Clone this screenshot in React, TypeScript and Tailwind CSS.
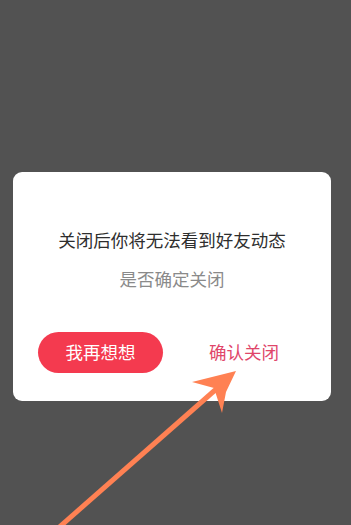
export default function App() {
  return (
    <div
      className="relative h-[525px] w-[351px] overflow-hidden bg-[#525252]"
      style={{ fontFamily: '"Noto Sans CJK SC", "Noto Sans", sans-serif' }}
    >
      <div className="pt-[172px] pl-[13px]">
        <div className="flex h-[229px] w-[318px] flex-col items-center rounded-[9px] bg-white">
          <p className="mt-[56px] text-[17.5px] leading-[24px] text-[#2e2e2e]">
            关闭后你将无法看到好友动态
          </p>
          <p className="mt-[15px] text-[17.5px] leading-[24px] text-[#8a8a8a]">
            是否确定关闭
          </p>
          <div className="mt-[41px] flex w-full items-center pl-[25px]">
            <button className="h-[41px] w-[125px] rounded-full bg-[#f43a4f] text-[17.5px] text-white">
              我再想想
            </button>
            <button className="ml-[46px] text-[17.5px] text-[#e0466a]">确认关闭</button>
          </div>
        </div>
      </div>
      <svg
        className="pointer-events-none absolute left-0 top-0"
        width="351"
        height="525"
        viewBox="0 0 351 525"
      >
        <line x1="56" y1="530" x2="222" y2="384" stroke="#ff8153" strokeWidth="5" />
        <polygon points="236,371 192,382 214,388 222,413 226,392" fill="#ff8153" />
      </svg>
    </div>
  );
}
